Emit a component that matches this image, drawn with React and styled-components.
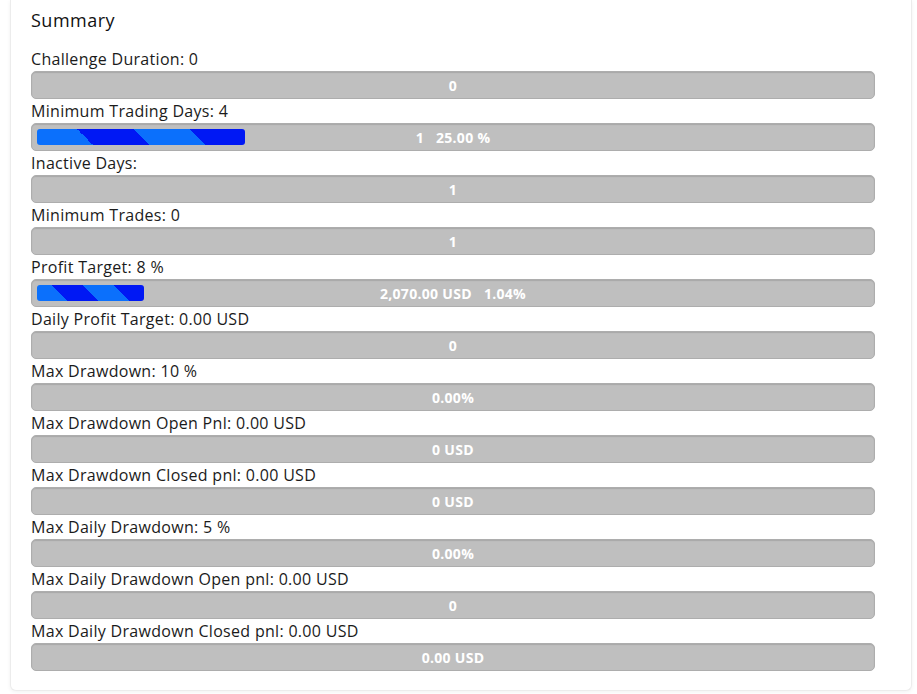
import React from "react";
import styled, { createGlobalStyle } from "styled-components";

const Global = createGlobalStyle`
  html, body { margin: 0; padding: 0; background: #ffffff; }
  body { font-family: "Open Sans", "Liberation Sans", sans-serif; color: #212529; }
`;

const Page = styled.div`
  padding: 0 5px 4px 10px;
`;

const Card = styled.section`
  background: #fff;
  border: 1px solid #ececec;
  border-top: none;
  border-radius: 0 0 6px 6px;
  box-shadow: 0 1px 4px rgba(0, 0, 0, 0.06);
  padding: 8px 36px 19px 20px;
`;

const Title = styled.h2`
  margin: 0 0 16px;
  font-size: 18px;
  line-height: 24px;
  font-weight: 500;
  letter-spacing: 0.5px;
  color: #111;
`;

const List = styled.div`
  display: flex;
  flex-direction: column;
  gap: 1px;
`;

const Row = styled.div`
  display: flex;
  flex-direction: column;
  gap: 1px;
`;

const Label = styled.div`
  font-size: 16px;
  line-height: 22px;
  color: #1b1b1b;
  letter-spacing: 0.3px;
`;

const Track = styled.div`
  position: relative;
  height: 28px;
  box-sizing: border-box;
  background: #bfbfbf;
  border: 1px solid #adadad;
  border-radius: 5px;
  box-shadow: inset 0 1px 1px rgba(0, 0, 0, 0.12);
  padding: 5px 5px;
  display: flex;
  align-items: stretch;
`;

const Fill = styled.div`
  height: 100%;
  border-radius: 3px;
  background: linear-gradient(
    45deg,
    #0b70fc 25%,
    #0018f4 25%,
    #0018f4 50%,
    #0b70fc 50%,
    #0b70fc 75%,
    #0018f4 75%
  );
`;

const Value = styled.div`
  position: absolute;
  inset: 0;
  display: flex;
  align-items: center;
  justify-content: center;
  gap: 12px;
  color: #fff;
  font-size: 14px;
  letter-spacing: 0.3px;
  font-weight: 700;
`;

const rows = [
  { label: "Challenge Duration: 0", values: ["0"] },
  { label: "Minimum Trading Days: 4", values: ["1", "25.00 %"], fill: 208 },
  { label: "Inactive Days:", values: ["1"] },
  { label: "Minimum Trades: 0", values: ["1"] },
  { label: "Profit Target: 8 %", values: ["2,070.00 USD", "1.04%"], fill: 107 },
  { label: "Daily Profit Target: 0.00 USD", values: ["0"] },
  { label: "Max Drawdown: 10 %", values: ["0.00%"] },
  { label: "Max Drawdown Open Pnl: 0.00 USD", values: ["0 USD"] },
  { label: "Max Drawdown Closed pnl: 0.00 USD", values: ["0 USD"] },
  { label: "Max Daily Drawdown: 5 %", values: ["0.00%"] },
  { label: "Max Daily Drawdown Open pnl: 0.00 USD", values: ["0"] },
  { label: "Max Daily Drawdown Closed pnl: 0.00 USD", values: ["0.00 USD"] },
];

export default function App() {
  return (
    <>
      <Global />
      <Page>
        <Card>
          <Title>Summary</Title>
          <List>
            {rows.map((r) => (
              <Row key={r.label}>
                <Label>{r.label}</Label>
                <Track>
                  {r.fill ? <Fill style={{ width: r.fill }} /> : null}
                  <Value>
                    {r.values.map((v) => (
                      <span key={v}>{v}</span>
                    ))}
                  </Value>
                </Track>
              </Row>
            ))}
          </List>
        </Card>
      </Page>
    </>
  );
}
